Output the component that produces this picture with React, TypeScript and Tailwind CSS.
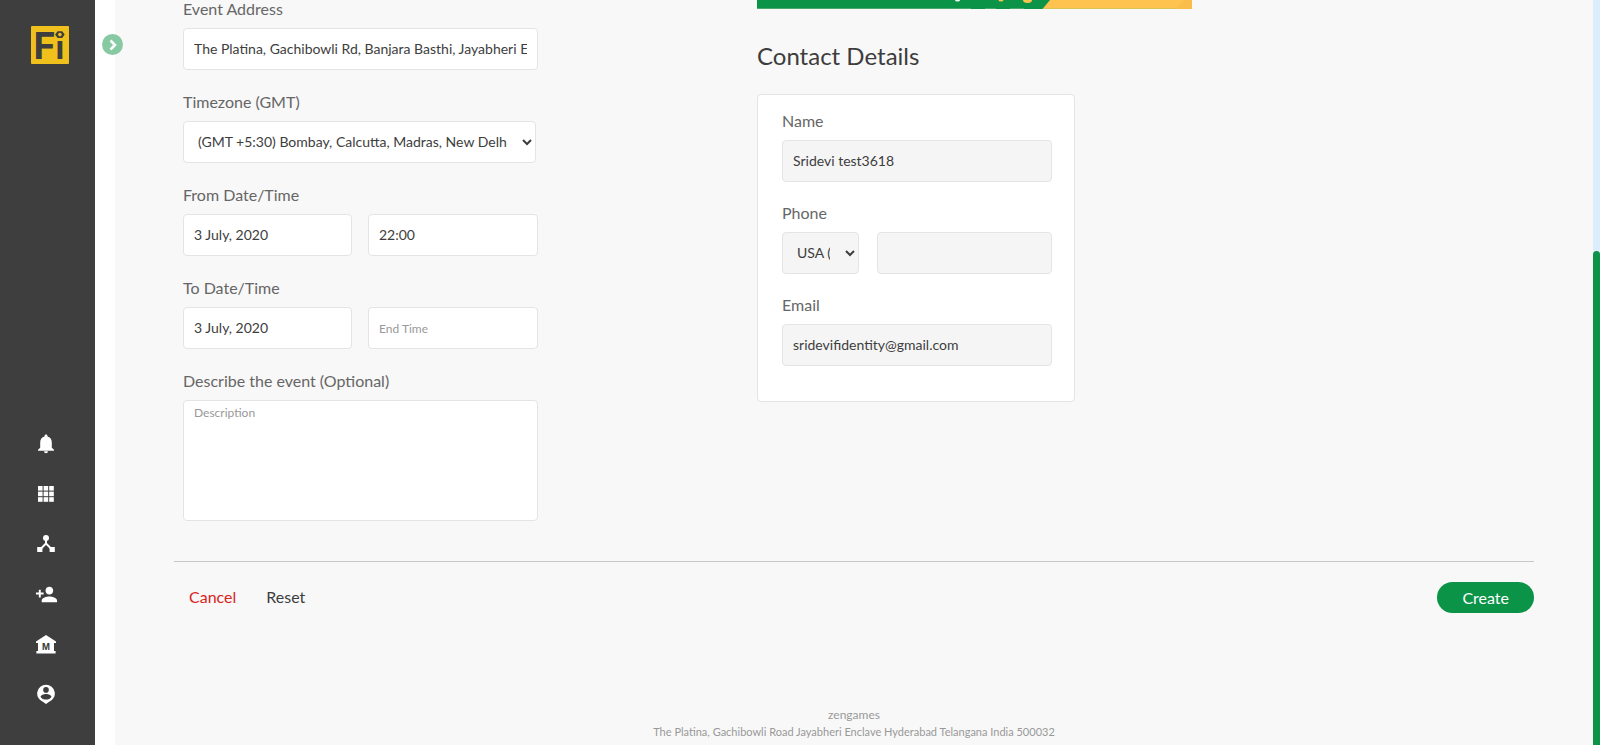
import type { ReactNode } from 'react';
import { MdPersonAdd } from 'react-icons/md';

const box =
  'h-[42px] min-w-0 rounded border border-[#e4e4e4] px-[10px] pb-[2px] text-sm text-[#3d3d3d] outline-none placeholder:text-xs placeholder:text-[#999999]';
const white = 'bg-white';
const grey = 'bg-[#f5f5f5]';

function Field({ id, label, children }: { id: string; label: string; children: ReactNode }) {
  return (
    <div className="flex flex-col gap-[10px]">
      <label htmlFor={id} className="text-base leading-[18px] text-[#666666]">
        {label}
      </label>
      {children}
    </div>
  );
}

function Logo() {
  return (
    <svg viewBox="0 0 38 38" className="ml-[5px] size-[38px] overflow-visible" role="img" aria-label="Fi">
      <rect width="38" height="38" rx="1" fill="#f0c01c" />
      <text x="2.500" y="33" fontFamily="Inter" fontWeight="700" fontSize="37.500" fill="#3e3e3e">
        F
      </text>
      <text x="28.800" y="33" textAnchor="middle" fontFamily="Inter" fontWeight="700" fontSize="32" fill="#3e3e3e">
        ı
      </text>
      <path d="M26.600 5.200h4.600l2.500 3.400-2.500 3.400h-4.600l-2.500-3.400z" fill="#3e3e3e" />
      <circle cx="28.900" cy="8.600" r="1.800" fill="#f0c01c" />
    </svg>
  );
}

function BellIcon() {
  return (
    <svg viewBox="0 0 20 20" className="size-5" fill="#fff" aria-hidden="true">
      <path d="M10 .6c.9 0 1.500.6 1.500 1.500v.5c2.700.7 4.300 2.900 4.300 5.900v5.300l2.200 2v.9H2v-.9l2.200-2V8.500c0-3 1.600-5.200 4.300-5.900v-.5C8.500 1.200 9.100.6 10 .6zM8 17.300h4a2 2 0 0 1-4 0z" />
    </svg>
  );
}

function GridIcon() {
  return (
    <svg viewBox="0 0 20 20" className="size-5" fill="#fff" aria-hidden="true">
      {[2, 7.6, 13.2].map((y) =>
        [2, 7.6, 13.2].map((x) => <rect key={`${x}-${y}`} x={x} y={y} width="4.600" height="4.600" />),
      )}
    </svg>
  );
}

function HubIcon() {
  return (
    <svg viewBox="0 0 20 20" className="size-5" fill="#fff" aria-hidden="true">
      <circle cx="10" cy="4" r="3" />
      <path d="M10 5v5M10 9.500 4 15.500M10 9.500l6 6" stroke="#fff" strokeWidth="2" />
      <rect x="1.200" y="13" width="5.200" height="5" />
      <rect x="13.600" y="13" width="5.200" height="5" />
    </svg>
  );
}

function MuseumIcon() {
  return (
    <svg viewBox="0 0 20 20" className="size-5" aria-hidden="true">
      <path d="M10 1 20 7.500V9h-2v8h1.600v2.400H.4V17H2V9H0V7.500z" fill="#fff" />
      <text x="10" y="15.600" textAnchor="middle" fontFamily="Inter" fontWeight="700" fontSize="8.500" fill="#3e3e3e">
        M
      </text>
    </svg>
  );
}

function AccountPinIcon() {
  return (
    <svg viewBox="0 0 20 20" className="size-5" aria-hidden="true">
      <path d="M10 .8a8.800 8.800 0 0 1 3.200 17L10 20l-3.200-2.200A8.800 8.800 0 0 1 10 .8z" fill="#fff" />
      <circle cx="10" cy="5.900" r="2.800" fill="#3e3e3e" />
      <path d="M4.600 13c0-2 3-3 5.400-3s5.400 1 5.400 3c-1 1.600-3 2.600-5.400 2.600S5.600 14.600 4.600 13z" fill="#3e3e3e" />
    </svg>
  );
}

const nav: { label: string; icon: ReactNode }[] = [
  { label: 'Notifications', icon: <BellIcon /> },
  { label: 'Apps', icon: <GridIcon /> },
  { label: 'Network', icon: <HubIcon /> },
  { label: 'Add person', icon: <MdPersonAdd className="size-[23px]" /> },
  { label: 'Museum', icon: <MuseumIcon /> },
  { label: 'Account', icon: <AccountPinIcon /> },
];

export default function App() {
  return (
    <div className="flex min-h-screen bg-white font-[Lato,Carlito,sans-serif] text-[#3d3d3d]">
      <aside className="flex w-[95px] shrink-0 flex-col items-center justify-between bg-[#3e3e3e] pt-[26px] pb-[39px]">
        <Logo />
        <nav className="flex w-full flex-col items-center gap-[26px] pr-[3px] text-white">
          {nav.map((item) => (
            <button key={item.label} aria-label={item.label} className="flex size-6 items-center justify-center">
              {item.icon}
            </button>
          ))}
        </nav>
      </aside>

      <div className="relative w-5 shrink-0">
        <button
          aria-label="Expand menu"
          className="absolute top-[34px] left-[7px] z-10 flex size-[21px] items-center justify-center rounded-full bg-[#87c9a3]"
        >
          <svg viewBox="0 0 10 12" className="h-3 w-[10px]" fill="none" stroke="#fff" strokeWidth="2.500">
            <path d="M2.500 1.500 7 6l-4.500 4.500" />
          </svg>
        </button>
      </div>

      <main className="flex min-w-0 flex-1 flex-col bg-[#f8f8f8]">
        <form className="mx-[59px]" onSubmit={(e) => e.preventDefault()}>
          <div className="grid grid-cols-[583fr_777fr]">
            <div className="flex w-[364px] flex-col gap-[23px] pl-[9px]">
              <Field id="address" label="Event Address">
                <input
                  id="address"
                  className={`${box} ${white}`}
                  defaultValue="The Platina, Gachibowli Rd, Banjara Basthi, Jayabheri Enclave"
                />
              </Field>
              <Field id="zone" label="Timezone (GMT)">
                <select id="zone" className={`${box} ${white} mr-[2px] pr-3`}>
                  <option>(GMT +5:30) Bombay, Calcutta, Madras, New Delhi</option>
                </select>
              </Field>
              <Field id="from" label="From Date/Time">
                <div className="grid grid-cols-[169fr_170fr] gap-4">
                  <input id="from" className={`${box} ${white}`} defaultValue="3 July, 2020" />
                  <input aria-label="Start time" className={`${box} ${white}`} defaultValue="22:00" />
                </div>
              </Field>
              <Field id="to" label="To Date/Time">
                <div className="grid grid-cols-[169fr_170fr] gap-4">
                  <input id="to" className={`${box} ${white}`} defaultValue="3 July, 2020" />
                  <input aria-label="End time" className={`${box} ${white}`} placeholder="End Time" />
                </div>
              </Field>
              <Field id="about" label="Describe the event (Optional)">
                <textarea
                  id="about"
                  placeholder="Description"
                  className="h-[121px] resize-none rounded border border-[#e4e4e4] bg-white px-[10px] py-1 text-sm outline-none placeholder:text-xs placeholder:text-[#999999]"
                />
              </Field>
            </div>

            <div>
              <svg viewBox="0 0 435 9" className="block h-[9px] w-[435px]" aria-hidden="true">
                <rect width="435" height="9" fill="#0b9347" />
                <path d="M293 0h142v9H285.500z" fill="#fec34f" />
                <path d="M427 0h8v9h-17z" fill="#f9bd49" />
                <path d="M0 8.500h214M228 8.500h11M253 8.500h14" stroke="#4aa86c" />
                <path d="M286 8.500h133" stroke="#d9c455" />
                <ellipse cx="200.500" cy="0" rx="2.500" ry="1.500" fill="#fff" />
                <ellipse cx="244" cy="0" rx="2.500" ry="1.500" fill="#fec34f" />
                <ellipse cx="270.500" cy="0" rx="4.500" ry="3" fill="#fec34f" />
              </svg>
              <h2 className="mt-[31px] mb-[22px] text-2xl">Contact Details</h2>
              <section className="flex h-[308px] w-[318px] flex-col gap-[22px] rounded border border-[#e4e4e4] bg-white pt-[17px] pr-[22px] pl-6">
                <Field id="name" label="Name">
                  <input id="name" readOnly className={`${box} ${grey}`} value="Sridevi test3618" />
                </Field>
                <Field id="phone" label="Phone">
                  <div className="flex gap-[18px]">
                    <select aria-label="Country code" className={`${box} ${grey} w-[77px] pr-3`}>
                      <option>USA (+1)</option>
                    </select>
                    <input id="phone" readOnly className={`${box} ${grey} flex-1`} />
                  </div>
                </Field>
                <Field id="email" label="Email">
                  <input id="email" readOnly className={`${box} ${grey}`} value="sridevifidentity@gmail.com" />
                </Field>
              </section>
            </div>
          </div>

          <div className="mt-10 flex items-center border-t border-[#c8c8c8] pt-5 pl-[15px] text-base">
            <button type="button" className="pb-[2px] text-[#d9231c]">
              Cancel
            </button>
            <button type="reset" className="ml-[30px] pb-[2px]">
              Reset
            </button>
            <button type="submit" className="ml-auto h-[31px] rounded-full bg-[#0b9347] px-[25px] text-white">
              Create
            </button>
          </div>
        </form>
        <footer className="mt-auto pb-[5px] text-center text-[#999999]">
          <p className="text-xs leading-[17px]">zengames</p>
          <p className="text-[11px] leading-[17px]">
            The Platina, Gachibowli Road Jayabheri Enclave Hyderabad Telangana India 500032
          </p>
        </footer>
      </main>

      <div className="flex w-[7px] shrink-0 flex-col bg-[#dcedfb] pt-[251px]">
        <div className="flex-1 rounded-t-full bg-[#0b9347]" />
      </div>
    </div>
  );
}
